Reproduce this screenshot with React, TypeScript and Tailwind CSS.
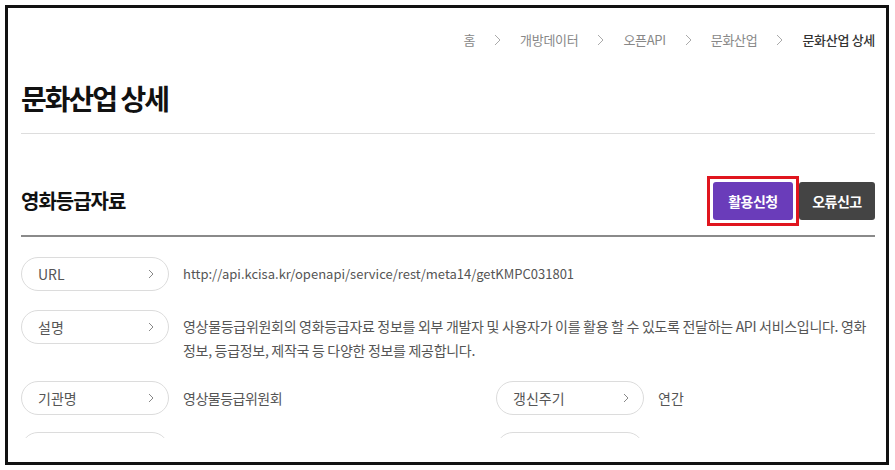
import React from "react";

const FONT = { fontFamily: '"Noto Sans CJK KR", "Noto Sans", sans-serif' };

function Chevron({ className = "" }: { className?: string }) {
  return (
    <svg width="7" height="12" viewBox="0 0 7 12" className={className} fill="none">
      <polyline points="1,1 6,6 1,11" stroke="currentColor" strokeWidth="1" />
    </svg>
  );
}

function Pill({ label }: { label: string }) {
  return (
    <div className="flex h-[34px] w-[148px] shrink-0 items-center justify-between rounded-full border border-[#dcdcdc] pl-4 pr-[14px] text-[14px] text-[#555]">
      <span>{label}</span>
      <svg width="6" height="10" viewBox="0 0 6 10" fill="none" className="text-[#888]">
        <polyline points="1,1 5,5 1,9" stroke="currentColor" strokeWidth="1" />
      </svg>
    </div>
  );
}

export default function App() {
  const crumbs = ["홈", "개방데이터", "오픈API", "문화산업"];
  return (
    <div className="h-[470px] w-[895px] overflow-hidden bg-white p-[5px]" style={FONT}>
      <div className="h-[460px] w-[884px] overflow-hidden border-[3px] border-[#111] bg-white pl-[13px] pr-[11px]">
        {/* breadcrumb */}
        <div className="flex h-[62px] items-center justify-end pt-[1px] text-[13px] tracking-[-0.3px] text-[#888]">
          {crumbs.map((c) => (
            <React.Fragment key={c}>
              <span>{c}</span>
              <Chevron className="mx-[19px] text-[#aaa]" />
            </React.Fragment>
          ))}
          <span className="font-medium text-[#333]">문화산업 상세</span>
        </div>
        {/* title */}
        <div className="border-b border-[#dddddd] pb-[7px]">
          <h1 className="text-[28px] font-bold leading-[56px] tracking-[-2px] text-[#111]">문화산업 상세</h1>
        </div>
        {/* section header */}
        <div className="mt-[42px] flex items-center justify-between border-b-2 border-[#8a8a8a] pb-[9px]">
          <h2 className="text-[20px] font-bold tracking-[-1px] text-[#111]">영화등급자료</h2>
          <div className="flex items-center">
            <div className="border-[3px] border-[#e0161e] p-[3px]">
              <button className="block h-[38px] w-[80px] rounded-[3px] bg-[#6a3cba] text-[14px] font-bold tracking-[-0.5px] text-white">
                활용신청
              </button>
            </div>
            <button className="h-[38px] w-[76px] rounded-[3px] bg-[#444] text-[14px] font-bold tracking-[-0.5px] text-white">
              오류신고
            </button>
          </div>
        </div>
        {/* rows */}
        <div className="mt-[20px] flex flex-col gap-[19px] text-[14px] text-[#555]">
          <div className="flex items-center gap-[14px]">
            <Pill label="URL" />
            <span className="text-[13px]">http://api.kcisa.kr/openapi/service/rest/meta14/getKMPC031801</span>
          </div>
          <div className="flex items-start gap-[14px]">
            <Pill label="설명" />
            <p className="break-keep pt-[4px] leading-[24px] tracking-[-0.3px]">
              영상물등급위원회의 영화등급자료 정보를 외부 개발자 및 사용자가 이를 활용 할 수 있도록 전달하는 API 서비스입니다. 영화
              정보, 등급정보, 제작국 등 다양한 정보를 제공합니다.
            </p>
          </div>
          <div className="flex items-center">
            <div className="flex w-[475px] items-center gap-[14px]">
              <Pill label="기관명" />
              <span className="tracking-[-0.5px]">영상물등급위원회</span>
            </div>
            <div className="flex items-center gap-[14px]">
              <Pill label="갱신주기" />
              <span>연간</span>
            </div>
          </div>
          <div className="-mt-[2px] flex h-[6px] items-start overflow-hidden">
            <div className="w-[475px]">
              <Pill label="" />
            </div>
            <Pill label="" />
          </div>
        </div>
      </div>
    </div>
  );
}
